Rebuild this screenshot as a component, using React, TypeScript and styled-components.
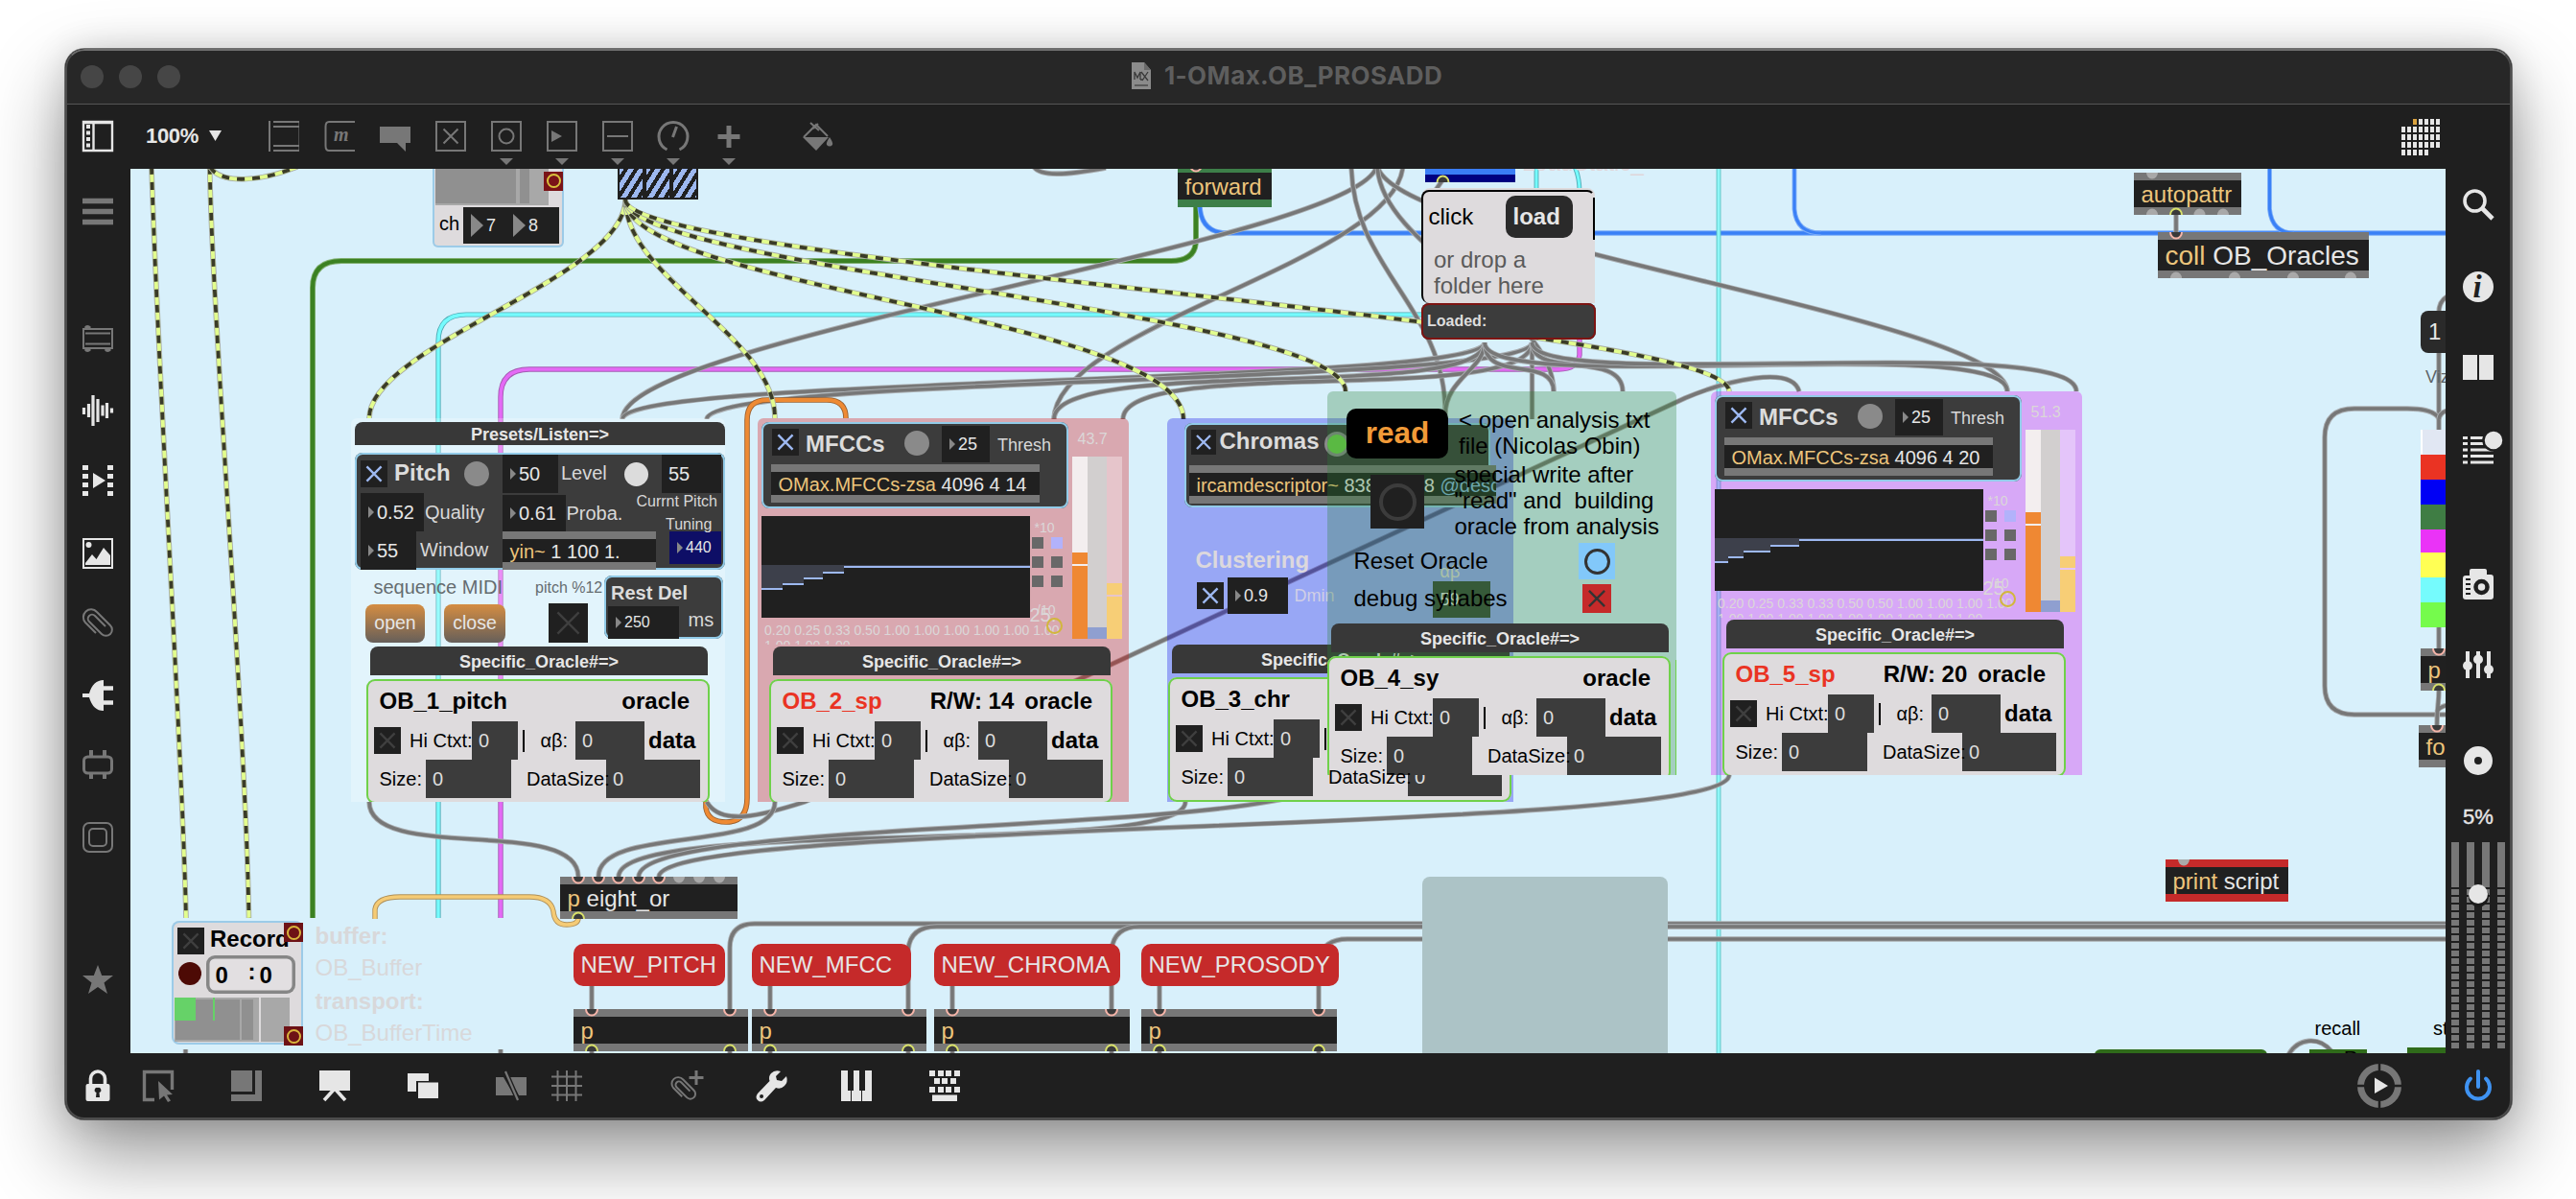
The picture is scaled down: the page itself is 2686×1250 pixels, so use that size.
import React from "react";
import styled, { createGlobalStyle } from "styled-components";

const Global = createGlobalStyle`
  * { box-sizing: border-box; }
  html, body { margin: 0; padding: 0; background: #fff; }
  body { width: 2686px; height: 1250px; overflow: hidden; font-family: "Liberation Sans", Arial, sans-serif; }
`;

const dark = "#202020";
const panel = "#3c3c3c";
const strip = "#777777";
const gold = "#edc57c";
const pale = "#e6e6e6";
const soft = "#dcdcdc";
const dim = "#777777";
const ring = "#92cbe8";

/* ---------- window frame ---------- */

const Desktop = styled.div`
  width: 2686px;
  height: 1250px;
  padding: 51px 67px 0 68px;
  background: #fff;
  overflow: hidden;
`;
const Window = styled.div`
  width: 2551px;
  height: 1116px;
  display: flex;
  flex-direction: column;
  border-radius: 20px;
  overflow: hidden;
  background: #1f1f1f;
  box-shadow: 0 36px 80px rgba(0, 0, 0, 0.42), 0 0 36px rgba(0, 0, 0, 0.14), 0 0 0 1px rgba(0, 0, 0, 0.5);
  position: relative;
  &::after {
    content: "";
    position: absolute;
    inset: 0;
    border-radius: 20px;
    border: 2px solid #4c4c4c;
    border-top-color: #6d6d6d;
    pointer-events: none;
  }
`;
const TitleBar = styled.header`
  flex: none;
  height: 58px;
  display: grid;
  grid-template-columns: 1fr auto 1fr;
  align-items: center;
  padding: 0 16px;
  background: #272727;
  border-bottom: 1px solid #555;
`;
const Lights = styled.div`
  display: flex;
  gap: 16px;
`;
const Light = styled.span`
  width: 24px;
  height: 24px;
  border-radius: 50%;
  background: #464646;
`;
const Title = styled.div`
  display: flex;
  align-items: center;
  gap: 14px;
  padding: 0 3px 2px 0;
  font: 700 26px/30px Inter, sans-serif;
  letter-spacing: 0.4px;
  color: #5e5e5e;
`;
const ToolBar = styled.div`
  flex: none;
  height: 67px;
  display: flex;
  align-items: flex-start;
  padding: 17px 6px 0 18px;
`;
const Zoom = styled.div`
  flex: none;
  margin: 6px 0 0 34px;
  width: 128px;
  display: flex;
  gap: 11px;
  font: 700 22px/20px "Liberation Sans", Arial, sans-serif;
  letter-spacing: -0.3px;
  color: ${pale};
`;
const ZoomArrow = styled.svg`
  margin-top: 4px;
`;
const Tools = styled.div`
  display: flex;
  gap: 26px;
`;
const Tool = styled.div<{ $menu?: boolean }>`
  width: 32px;
  display: flex;
  flex-direction: column;
  align-items: center;
  gap: 7px;
  &::after {
    content: "";
    display: ${(p) => (p.$menu ? "block" : "none")};
    border: 7px solid transparent;
    border-top: 7px solid ${dim};
    border-bottom: 0;
  }
`;
const PaintTool = styled.div`
  margin-left: 60px;
`;
const GridTool = styled.div`
  margin: -2px 69px 0 auto;
`;
const Main = styled.div`
  flex: none;
  height: 922px;
  display: grid;
  grid-template-columns: 68px 2414px 69px;
`;
const Side = styled.nav`
  display: flex;
  flex-direction: column;
  align-items: center;
  padding-right: 1px;
`;
const SideItem = styled.div<{ $gap: number }>`
  flex: none;
  margin-top: ${(p) => p.$gap}px;
  height: 32px;
`;
const Percent = styled.div`
  flex: none;
  margin: 33px 0 16px;
  height: 20px;
  font: 400 22px/20px "Liberation Sans", Arial, sans-serif;
  -webkit-text-stroke: 0.4px ${pale};
  color: ${pale};
`;
const Footer = styled.footer`
  flex: none;
  height: 69px;
  display: flex;
  padding: 18px 0 0 16px;
`;
const FootItem = styled.div<{ $gap?: number; $up?: number }>`
  margin-left: ${(p) => p.$gap ?? 0}px;
  margin-top: ${(p) => -(p.$up ?? 0)}px;
`;

/* ---------- patch canvas ---------- */

const Canvas = styled.main`
  position: relative;
  overflow: hidden;
  background: #d8f0fb;
`;
/* Shifts its children so they can be placed in patcher coordinates. */
const World = styled.div<{ $x: number; $y: number }>`
  position: absolute;
  left: ${(p) => -p.$x}px;
  top: ${(p) => -p.$y}px;
`;
const Wires = styled.svg`
  position: absolute;
  left: 136px;
  top: 176px;
`;
interface BoxProps {
  $x: number;
  $y: number;
  $w: number;
  $h: number;
  $bg?: string;
  $r?: number | string;
  $ring?: string;
  $rw?: number;
}
const Box = styled.div<BoxProps>`
  position: absolute;
  left: ${(p) => p.$x}px;
  top: ${(p) => p.$y}px;
  width: ${(p) => p.$w}px;
  height: ${(p) => p.$h}px;
  background: ${(p) => p.$bg ?? dark};
  border-radius: ${(p) => (typeof p.$r === "string" ? p.$r : `${p.$r ?? 0}px`)};
  box-shadow: ${(p) => (p.$ring ? `inset 0 0 0 ${p.$rw ?? 2}px ${p.$ring}` : "none")};
`;
const Patcher = styled(Box)`
  overflow: hidden;
`;
const ObjectBox = styled(Box)<{ $edge: string; $s: number }>`
  display: flex;
  align-items: center;
  padding: 1px 0 0 7.5px;
  border-top: 8px solid ${(p) => p.$edge};
  border-bottom: 8px solid ${(p) => p.$edge};
  overflow: hidden;
  white-space: pre;
  font-size: ${(p) => p.$s}px;
  line-height: ${(p) => p.$s}px;
  color: ${pale};
`;
const Header = styled(Box)`
  display: flex;
  align-items: center;
  justify-content: center;
  padding-top: 2px;
  background: #383838;
  border-radius: 8px 8px 0 0;
  color: ${pale};
  font-size: 18px;
  font-weight: 700;
  line-height: 20px;
`;
/* A message or text button: its caption sits in the middle of the box. */
const Button = styled(Box)<{ $s?: number; $c?: string; $bold?: boolean; $start?: number }>`
  display: flex;
  align-items: center;
  justify-content: ${(p) => (p.$start === undefined ? "center" : "flex-start")};
  padding-left: ${(p) => p.$start ?? 0}px;
  white-space: pre;
  font-size: ${(p) => p.$s ?? 24}px;
  line-height: 1;
  font-weight: ${(p) => (p.$bold ? 700 : 400)};
  color: ${(p) => p.$c ?? pale};
`;
const NumField = styled(Box)<{ $s: number }>`
  display: flex;
  align-items: center;
  gap: 3px;
  padding-left: 8px;
  font-size: ${(p) => p.$s}px;
  line-height: 1;
  color: ${pale};
`;
const Tri = styled.i<{ $w?: number; $h?: number }>`
  flex: none;
  border-style: solid;
  border-color: transparent transparent transparent #888;
  border-width: ${(p) => (p.$h ?? 12) / 2}px 0 ${(p) => (p.$h ?? 12) / 2}px ${(p) => p.$w ?? 6}px;
`;
/* Text placed by the left end of its baseline. */
const Label = styled.span<{ $x: number; $b: number; $s?: number; $c?: string; $bold?: boolean }>`
  position: absolute;
  left: ${(p) => p.$x}px;
  top: ${(p) => p.$b - 0.8465 * (p.$s ?? 24)}px;
  font-size: ${(p) => p.$s ?? 24}px;
  line-height: 1;
  font-weight: ${(p) => (p.$bold ? 700 : 400)};
  color: ${(p) => p.$c ?? "#000"};
  white-space: pre;
`;
const Gold = styled.span`
  color: ${gold};
`;
const Sky = styled.span`
  color: #8ab8e0;
`;
const Disc = styled.i<{ $x: number; $y: number; $r: number; $c: string; $ring?: string; $rw?: number }>`
  position: absolute;
  left: ${(p) => p.$x - p.$r}px;
  top: ${(p) => p.$y - p.$r}px;
  width: ${(p) => p.$r * 2}px;
  height: ${(p) => p.$r * 2}px;
  border-radius: 50%;
  background: ${(p) => p.$c};
  border: ${(p) => (p.$ring ? `${p.$rw ?? 2}px solid ${p.$ring}` : "0")};
`;
const Hatches = styled(Box)`
  display: grid;
  grid-template-columns: repeat(3, 28px);
`;
const Hatch = styled.i`
  background: repeating-linear-gradient(122deg, #9db8f0 0 5px, #202020 5px 9px);
  box-shadow: inset 0 0 0 2px #202020;
`;
const Channels = styled(Box)`
  display: grid;
  grid-template-columns: 13px 31px 13px auto;
  align-items: center;
  justify-content: start;
  padding-left: 8px;
  font-size: 18px;
  line-height: 1;
  color: ${pale};
  & > span { padding-left: 3px; }
`;
const Palette = styled(Box)`
  display: flex;
  flex-direction: column;
`;
const Swatch = styled.i<{ $c: string; $h: number }>`
  height: ${(p) => p.$h}px;
  background: ${(p) => p.$c};
  &:first-child { border-left: 2px solid #fff; }
`;
const Drop = styled(Box)`
  display: flex;
  flex-direction: column;
  padding: 57px 0 0 11px;
  font-size: 24px;
  line-height: 27px;
  color: #5a5a5a;
  border: 2px solid #000;
  border-right-color: transparent;
  border-bottom: 0;
`;

const ToggleSvg = styled.svg<{ $bg: string }>`
  display: block;
  flex: none;
  background: ${(p) => p.$bg};
`;
const Cross = ({ w, c, bg = dark }: { w: number; c: string; bg?: string }) => {
  const d = w * 0.27;
  const m = w / 2;
  return (
    <ToggleSvg $bg={bg} width={w} height={w}>
      <path d={`M${m - d} ${m - d}l${2 * d} ${2 * d}M${m + d} ${m - d}l${-2 * d} ${2 * d}`} stroke={c} strokeWidth="2.4" fill="none" />
    </ToggleSvg>
  );
};
const Toggle = ({ x, y, w = 28, c = "#9db8f0", bg = dark }: { x: number; y: number; w?: number; c?: string; bg?: string }) => (
  <Box $x={x} $y={y} $w={w} $h={w} $bg={bg}>
    <Cross w={w} c={c} bg={bg} />
  </Box>
);

const NumBox = ({ x, y, w, h, v, s = 20, bg }: { x: number; y: number; w: number; h: number; v: string; s?: number; bg?: string }) => (
  <NumField $x={x} $y={y} $w={w} $h={h} $s={s} $bg={bg}>
    <Tri />
    <span>{v}</span>
  </NumField>
);

const Obj = ({ x, y, w, h = 44, name, args, s = 24, edge = strip }: { x: number; y: number; w: number; h?: number; name: string; args?: React.ReactNode; s?: number; edge?: string }) => (
  <ObjectBox $x={x} $y={y} $w={w} $h={h} $edge={edge} $s={s}>
    <Gold>{name}</Gold>
    {args ? <span> {args}</span> : null}
  </ObjectBox>
);

/* ---------- oracle card ---------- */

const Card = styled(Box)`
  display: flex;
  flex-direction: column;
  font-size: 20px;
  line-height: 20px;
  white-space: pre;
`;
const CardTitle = styled.div<{ $red?: boolean }>`
  height: 44px;
  display: flex;
  align-items: center;
  gap: 11px;
  padding: 2px 21px 0 13.5px;
  font-size: 24px;
  font-weight: 700;
  & > :first-child {
    color: ${(p) => (p.$red ? "#ea3323" : "#000")};
    margin-right: auto;
  }
`;
const CardRow = styled.div<{ $cols: string }>`
  height: 40px;
  display: grid;
  grid-template-columns: ${(p) => p.$cols};
  align-items: center;
`;
const Field = styled.span`
  height: 40px;
  padding: 9.5px 0 0 7px;
  background: ${panel};
  color: #ddd;
`;
const Bar = styled.i`
  width: 2px;
  height: 23px;
  margin-left: 4.5px;
  background: #000;
`;
const Over = styled.span`
  position: relative;
  z-index: 1;
`;
const Data = styled.b`
  padding-left: 4px;
  font-size: 24px;
`;

const OracleCard = ({ x, y, name, red, rw }: { x: number; y: number; name: string; red?: boolean; rw?: string }) => (
  <Card $x={x} $y={y} $w={358} $h={130} $bg="#dedbdd" $r={9} $ring="#6fd14a">
    <CardTitle $red={red}>
      <span>{name}</span>
      {rw && <span>{rw}</span>}
      <span>oracle</span>
    </CardTitle>
    <CardRow $cols="8px 37px 65px 48px 23.5px 36.5px 72px auto">
      <i />
      <Cross w={28} c="#3f3f3f" />
      <Over>Hi Ctxt:</Over>
      <Field>0</Field>
      <Bar />
      <span>αβ:</span>
      <Field>0</Field>
      <Data>data</Data>
    </CardRow>
    <CardRow $cols="13.5px 48.5px 89px 16px 83px 98px">
      <i />
      <span>Size:</span>
      <Field>0</Field>
      <i />
      <Over>DataSize:</Over>
      <Field>0</Field>
    </CardRow>
  </Card>
);

/* ---------- MFCC module ---------- */

const faint = "#dbd7d8";

const Graph = styled(Box)`
  display: flex;
  padding-top: 51px;
`;
const Step = styled.i<{ $w: number; $h: number }>`
  width: ${(p) => p.$w}px;
  height: ${(p) => p.$h}px;
  background: #3d404b;
  border-bottom: 2px solid #9db8f0;
`;
const Matrix = styled(Box)`
  display: grid;
  grid-template-columns: 12px 12px;
  grid-auto-rows: 12px;
  gap: 8px;
  & > i { background: #686868; }
  & > i:nth-child(2) { background: #b2b2fb; }
`;
const Coeffs = styled(Box)`
  overflow: hidden;
  padding: 3px 0 0 3px;
  font-size: 14px;
  line-height: 16px;
  white-space: pre;
  color: ${faint};
`;
const Sliders = styled(Box)`
  display: grid;
  grid-template-columns: 16px 20px 16px;
`;
const Slider = styled.div<{ $bg: string; $cap?: boolean; $c: string }>`
  display: flex;
  flex-direction: column;
  justify-content: flex-end;
  gap: 2px;
  background: ${(p) => p.$bg};
  & > i { background: ${(p) => p.$c}; }
`;
const Fill = styled.i<{ $h: number }>`
  height: ${(p) => p.$h}px;
`;

interface MfccProps {
  x: number;
  y: number;
  tint: string;
  args: string;
  value: string;
  steps: number[];
  peak: number;
  row1: string;
  row2: string;
  name: string;
  rw: string;
}
const Mfcc = ({ x, y, tint, args, value, steps, peak, row1, row2, name, rw }: MfccProps) => {
  const heights = [26, 20.5, 14.5, 8.5, 3];
  return (
    <Patcher $x={x} $y={y} $w={387} $h={400} $bg={tint} $r="6px 6px 0 0">
      <World $x={790} $y={436}>
        <Box $x={794} $y={440} $w={320} $h={90} $bg={panel} $r={8} $ring={ring} />
        <Toggle x={805} y={447} />
        <Label $x={840} $b={471.3} $bold $c={soft}>MFCCs</Label>
        <Disc $x={956} $y={462} $r={13} $c="#8a8a8a" />
        <NumBox x={982} y={444} w={50} h={38} v="25" s={18} />
        <Label $x={1040} $b={470} $s={18} $c="#d8d8d8">Thresh</Label>
        <Obj x={804} y={484} w={280} h={40} s={20} name="OMax.MFCCs-zsa" args={args} />
        <Graph $x={794} $y={538} $w={280} $h={106}>
          {heights.map((h, i) => <Step key={h} $w={steps[i]} $h={h} />)}
        </Graph>
        <Label $x={1078.5} $b={555} $s={14} $c={faint}>*10</Label>
        <Matrix $x={1076} $y={560} $w={32} $h={52} $bg="none"><i /><i /><i /><i /><i /><i /></Matrix>
        <Label $x={1081} $b={640.7} $s={14} $c={faint}>/10</Label>
        <Label $x={1073.5} $b={648} $s={20} $c={faint}>25.</Label>
        <Coeffs $x={794} $y={646} $w={314} $h={26} $bg="none">
          <div>{row1}</div>
          <div>{row2}</div>
        </Coeffs>
        <Disc $x={1099.7} $y={652.7} $r={8.500} $c="transparent" $ring="#d2b73c" />
        <Label $x={1123.5} $b={463.3} $s={16} $c={faint}>{value}</Label>
        <Sliders $x={1118} $y={476} $w={52} $h={190} $bg="none">
          <Slider $bg="#f3eeef" $c="#ef8833"><Fill $h={12} /><Fill $h={652 - peak} /></Slider>
          <Slider $bg="#d2cfcf" $c="#8f9fd0"><Fill $h={12} /></Slider>
          <Slider $bg="rgba(255,255,255,.34)" $c="#f7ce76"><Fill $h={12} /><Fill $h={44} /></Slider>
        </Sliders>
        <Header $x={806} $y={674} $w={352} $h={30}>Specific_Oracle#=&gt;</Header>
        <OracleCard x={802} y={708} name={name} red rw={rw} />
      </World>
    </Patcher>
  );
};

/* ---------- patch cords ---------- */

const Cord = ({ d, c = "#777", o = "#a9adb0", w = 3.6 }: { d: string; c?: string; o?: string; w?: number }) => (
  <>
    <path d={d} stroke={o} strokeWidth={w + 1.8} />
    <path d={d} stroke={c} strokeWidth={w} />
  </>
);
const Signal = ({ d }: { d: string }) => (
  <>
    <path d={d} stroke="#a9ada6" strokeWidth="5.600" />
    <path d={d} stroke="#e2fd8d" strokeWidth="3.800" />
    <path d={d} stroke="#3a3b28" strokeWidth="3.800" strokeDasharray="8 8" />
  </>
);

const upperCords = [
  "M1078 174C1085 184 1110 183 1153 175",
  "M1436 170C1436 250 649 351 649 437",
  "M1463 170C1463 270 1099 340 1099 437",
  "M1409 170C1409 280 1507 320 1507 430",
  "M1436 170C1436 250 2093 331 2093 408",
  "M1436 170C1436 260 1620 320 1620 408",
  "M1504 188L1497 198",
  "M1548 357C1548 402 649 391 649 437",
  "M1597.500 357C1597 402 737 391 737 437",
  "M1548 357C1548 420 1099 370 1099 437",
  "M1597.500 357C1597 425 1171 370 1171 437",
  "M1597.500 357V437",
  "M1548 357C1548 385 1507 395 1507 432",
  "M1548 357C1548 400 1620 370 1620 408",
  "M1597.500 357C1597 395 1692 365 1692 408",
  "M1548 357C1548 415 2093 345 2093 408",
  "M1597.500 357C1597 410 2165 345 2165 408",
];
const lowerCords = [
  "M737 836C752 862 795 850 839 836L1130 706L1757 415C1800 397 1868 380 1876 408",
  "M385 836C385 900 603 850 603 914",
  "M808 836C808 890 624 860 624 914",
  "M1236 836C1236 895 645 850 645 914",
  "M1388 808C1388 872 666 850 666 914",
  "M1803 808C1803 870 687 854 687 914",
  "M761 1052V988Q761 963 787 963H2550",
  "M947 1052V990Q949 966 977 966H2550",
  "M1159 1052V990Q1162 966 1188 966H2550",
  "M1375 1052V1000Q1380 979 1405 979H2550",
  "M617 1026V1052M803 1026V1052M993 1026V1052M1209 1026V1052",
  "M617 1094V1099M761 1094V1099M803 1094V1099M947 1094V1099M993 1094V1099M1159 1094V1099M1209 1094V1099M1375 1094V1099",
  "M193.500 1094V1099M522 1094V1099",
  "M2269 222V243",
  "M2552 309Q2543 314 2543 326V448",
  "M2543 436Q2537 426 2510 426H2455Q2424 426 2424 456V715Q2424 745 2455 745H2552",
  "M2543 437Q2544 430 2552 428",
  "M2543 654V678M2543 720C2543 735 2541 735 2541 757M2541 742Q2543 737 2552 735",
  "M2386 1100C2396 1082 2418 1080 2431 1096",
];

const Ports = ({ xs, y, kind }: { xs: number[]; y: number; kind: "in" | "out" | "freeIn" | "freeOut" }) => (
  <>
    {xs.map((x) => {
      const down = kind === "in" || kind === "freeIn";
      const d = down ? `M${x - 6} ${y}a6 6.500 0 0 0 12 0` : `M${x - 6} ${y}a6 6.500 0 0 1 12 0`;
      const free = kind === "freeIn" || kind === "freeOut";
      return <path key={x} d={d} fill={free ? "#a9a9a9" : "#3a3a3a"} stroke={free ? "none" : kind === "in" ? "#f5b4a8" : "#d8e06a"} strokeWidth="2" />;
    })}
  </>
);

/* ---------- icons ---------- */

const IconSvg = styled.svg`
  display: block;
  flex: none;
  overflow: visible;
`;
const Ico = ({ children, c = dim, w = 32, h = 32 }: { children: React.ReactNode; c?: string; w?: number; h?: number }) => (
  <IconSvg width={w} height={h} viewBox={`0 0 ${w} ${h}`} fill="none" stroke={c} color={c} strokeWidth="2">
    {children}
  </IconSvg>
);
const f = { fill: "currentColor", stroke: "none" };

const clipPath = "M8 19L19 8a4 4 0 0 1 6 6L12 27a6.200 6.200 0 0 1-9-9L17 4a8 8 0 0 1 12 11L18 26";

const Meter = () => (
  <Ico w={56} h={217}>
    {[0, 16, 32, 48].map((x) => (
      <React.Fragment key={x}>
        <rect x={x} y="0" width="8" height="47" {...f} />
        {Array.from({ length: 21 }, (_, i) => (
          <rect key={i} x={x} y={49 + i * 8} width="8" height="6" {...f} />
        ))}
      </React.Fragment>
    ))}
    <circle cx="28.500" cy="57" r="10.500" fill="#1a1a1a" stroke="none" />
    <circle cx="28" cy="54" r="10" fill={pale} stroke="none" />
  </Ico>
);

const News = [
  { x: 598, w: 158, t: "NEW_PITCH", pw: 182 },
  { x: 784, w: 166, t: "NEW_MFCC", pw: 182 },
  { x: 974, w: 194, t: "NEW_CHROMA", pw: 204 },
  { x: 1190, w: 206, t: "NEW_PROSODY", pw: 204 },
];

const Note = styled(Box)`
  display: flex;
  flex-direction: column;
  font-size: 24px;
  line-height: 27px;
  white-space: pre;
  background: none;
`;
const BufferInfo = styled(Box)`
  display: grid;
  grid-template-rows: 33px 34.5px 33px 33px;
  font-size: 24px;
  line-height: 27px;
  background: none;
  color: #d8d8da;
`;
const Clock = styled(Box)`
  display: grid;
  grid-template-columns: 34px 12px auto;
  align-items: center;
  padding: 1px 0 0 9.5px;
  font-size: 24px;
  font-weight: 700;
  line-height: 24px;
  & > :nth-child(2) { padding-bottom: 8px; }
`;

export default function App() {
  return (
    <>
      <Global />
      <Desktop>
        <Window>
          <TitleBar>
            <Lights><Light /><Light /><Light /></Lights>
            <Title>
              <svg width="20" height="28" viewBox="0 0 20 28">
                <path d="M0 0h13l7 8v20H0z" fill="#8b8b8b" />
                <path d="M13 0v8h7z" fill="#6a6a6a" />
                <path d="M3 18V10l3 6 3-6v8M9 18h3M10 10l7 9M17 10l-6 9" stroke="#3a3a3a" strokeWidth="1.300" fill="none" />
                <path d="M3 24h14" stroke="#5a5a5a" strokeWidth="2" />
              </svg>
              1-OMax.OB_PROSADD
            </Title>
            <span />
          </TitleBar>
          <ToolBar>
            <Ico c={pale}>
              <path d="M1 1h30v30H1zM11.500 1v30M1 2h30" strokeWidth="2.400" />
              <path d="M6 4v24" strokeWidth="4" strokeDasharray="4 2.500" />
            </Ico>
            <Zoom>
              <span>100%</span>
              <ZoomArrow width="13" height="11" viewBox="0 0 13 11"><path d="M0 0h13l-6.500 11z" fill={pale} /></ZoomArrow>
            </Zoom>
            <Tools>
              <Tool><Ico><path d="M1 0v32M5 1h27M5 6h27M5 26h27M5 31h27" /><path d="M31.500 2v28" strokeWidth="1" opacity=".5" /></Ico></Tool>
              <Tool><Ico><path d="M32 1H5Q1.500 1 1.500 6v20q0 5 3.500 5h27" /><text x="10" y="21" fontFamily="Liberation Serif" fontStyle="italic" fontWeight="700" fontSize="20" {...f}>m</text></Ico></Tool>
              <Tool><Ico><path d="M0 6h32v17h-5v9l-9-9H0z" {...f} /></Ico></Tool>
              <Tool><Ico><path d="M1 1h30v30H1zM8.500 8.500l15 15M23.500 8.500l-15 15" /></Ico></Tool>
              <Tool $menu><Ico><path d="M1 1h30v30H1z" /><circle cx="16" cy="16" r="7.500" /></Ico></Tool>
              <Tool $menu><Ico><path d="M1 1h30v30H1z" /><path d="M5 10l11 6-11 6z" {...f} /></Ico></Tool>
              <Tool $menu><Ico><path d="M1 1h30v30H1zM5 16h22" /></Ico></Tool>
              <Tool $menu><Ico><path d="M9.500 30A15 15 0 1 1 22.500 30M15.500 17L19.500 6" strokeWidth="3" /></Ico></Tool>
              <Tool $menu><Ico><path d="M16 5v23M4.500 16.500h23" strokeWidth="5" /></Ico></Tool>
            </Tools>
            <PaintTool>
              <Ico>
                <path d="M2 17L15 4l12 12" strokeWidth="2" /><path d="M1 17h27L15 31z" {...f} /><path d="M9 2l9 8M17 3l-5 5" strokeWidth="2" />
                <path d="M29 17q4 6 3 8-3 3-6 0-1-2 3-8z" {...f} />
              </Ico>
            </PaintTool>
            <GridTool>
              <Ico w={40} h={38} c={pale}>
                {[0, 1, 2, 3, 4].map((r) =>
                  [0, 1, 2, 3, 4, 5, 6].filter((c) => !(r === 0 && c < 2) && !(r === 4 && c > 4)).map((c) => (
                    <rect key={`${r}-${c}`} x={c * 6} y={r * 8} width="4" height="6" fill={r === 0 && c === 2 ? "#dca440" : pale} stroke="none" />
                  ))
                )}
              </Ico>
            </GridTool>
          </ToolBar>
          <Main>
            <Side>
              <SideItem $gap={31}><Ico><path d="M0 2.500h32M0 13.500h32M0 24.500h32" strokeWidth="5.400" /></Ico></SideItem>
              <SideItem $gap={98}><Ico><path d="M1 6h30v20H1zM3 10.500h26M3 21.500h26" /><path d="M3 5q2-3 5 0M3 27q2 3 5 0M24 27q2 3 5 0" strokeWidth="3" /></Ico></SideItem>
              <SideItem $gap={43}><Ico c={pale}><path d="M1.500 13v7M6.500 9v14M11 0v32M16 4v24M21 10.500v11M25.500 8v16M30.500 13.500v5" strokeWidth="3.200" /></Ico></SideItem>
              <SideItem $gap={41}><Ico c={pale}><path d="M3 0v32M29 0v32" strokeWidth="6" strokeDasharray="5 4" /><path d="M11 8l13 8-13 8z" {...f} /></Ico></SideItem>
              <SideItem $gap={44}><Ico c={pale}><path d="M1 1h30v30H1z" /><circle cx="6.500" cy="7" r="3" {...f} /><path d="M3 28v-2l7-9 4.500 5L22 10l7 8v10z" {...f} /></Ico></SideItem>
              <SideItem $gap={41}><Ico><g transform="matrix(-1 0 0 1 32 0)"><path d={clipPath} /></g></Ico></SideItem>
              <SideItem $gap={43}><Ico c={pale}><path d="M0 14h7Q11 0 22 0v32Q11 32 7 18H0z" {...f} /><path d="M22 8.500h10M22 23.500h10" strokeWidth="4.600" /></Ico></SideItem>
              <SideItem $gap={40}><Ico><rect x="1.500" y="8" width="29" height="17" rx="4" strokeWidth="3" /><path d="M9 1v6M23 1v6M9 26v5M23 26v5" strokeWidth="4" /></Ico></SideItem>
              <SideItem $gap={44}><Ico><rect x="1" y="1" width="30" height="30" rx="6" /><rect x="7" y="7" width="18" height="18" rx="4" /></Ico></SideItem>
              <SideItem $gap={117}><Ico><path d="M16 0l4.200 11H32l-9.500 7.500L26 30l-10-7-10 7 3.500-11.500L0 11h11.800z" {...f} /></Ico></SideItem>
            </Side>
            <Canvas>
              <World $x={136} $y={176}>
                <Wires width="2414" height="922" viewBox="136 176 2414 922" fill="none">
                  <Cord d="M1247 208V250Q1247 272 1221 272H356Q326 272 326 300V957" c="#3b8122" o="#7fae70" w={4.2} />
                  <Cord d="M1251 214Q1252 243 1280 243H2552" c="#3a80f6" o="#7aacf8" w={3.6} />
                  <Cord d="M1871 170V218Q1873 243 1899 243M2366.500 170V218Q2369 243 2392 243" c="#3a80f6" o="#7aacf8" w={3} />
                  <Cord d="M1484 328H486Q457 328 457 356V957" c="#75fbfd" o="#4fa9b4" w={3.4} />
                  <Cord d="M1792 170V1100" c="#8ef7f8" o="#5cc0c0" w={3} />
                  <Cord d="M1602 170V200M1640 170Q1647 182 1647 200" c="#75fbfd" o="#4fa9b4" w={3} />
                  <Cord d="M1647 352V370Q1645 385 1625 385H552Q522 385 522 414V957" c="#e46af5" o="#a45cb2" w={3.6} />
                  <Cord d="M391 958V948Q393 935 417 935H552Q574 935 577 950Q578 964 591 964Q603 964 603 957" c="#f5cb75" o="#b0915a" w={3.6} />
                  {upperCords.map((d) => <Cord key={d} d={d} />)}
                  <Cord d="M736 834V842Q738 857 757 857Q779 857 779 832V438Q779 417 800 417H862Q882 417 882 436" c="#ee8a33" o="#9a6030" w={3.8} />
                  {lowerCords.map((d) => <Cord key={d} d={d} />)}
                  <Signal d="M158 174C165 400 190 780 194 957" />
                  <Signal d="M218.700 174C221 330 256 750 259.500 957" />
                  <Signal d="M219 174C230 192 270 190 310 174" />
                  <Signal d="M652 208C652 290 385 360 385 436" />
                  <Signal d="M652 208C652 290 808 350 808 436" />
                  <Signal d="M652 208C652 300 1234 330 1234 437" />
                  <Signal d="M652 208C652 280 1403 325 1403 408" />
                  <Signal d="M652 208C652 275 1803 335 1803 408" />
                </Wires>

                {/* level meter with output channels */}
                <Box $x={451} $y={160} $w={137} $h={98} $bg="#dedbdd" $r={6} $ring="#9ccbe8" />
                <Box $x={454} $y={170} $w={118} $h={44} $bg="#a8a8a8" />
                <Box $x={454} $y={170} $w={84} $h={42} $bg="#909090" />
                <Box $x={542} $y={170} $w={10} $h={42} $bg="#909090" />
                <Box $x={567} $y={179} $w={20} $h={20} $bg="#7a1418" />
                <Disc $x={577} $y={188.5} $r={7.500} $c="transparent" $ring="#d8c23c" />
                <Label $x={458} $b={240} $s={20}>ch</Label>
                <Channels $x={483} $y={216} $w={100} $h={38}>
                  <Tri $w={13} $h={24} /><span>7</span><Tri $w={13} $h={24} /><span>8</span>
                </Channels>

                <Hatches $x={644} $y={160} $w={84} $h={48} $bg="none"><Hatch /><Hatch /><Hatch /></Hatches>

                <Obj x={1228} y={172} w={98} name="forward" edge="#3d7f49" />
                <Box $x={1486} $y={170} $w={94} $h={12} $bg="#3a7df5" />
                <Box $x={1486} $y={182} $w={94} $h={8} $bg="#000080" />
                <Label $x={1587} $b={178} $c="#dfd6da">LoadStatic_</Label>

                {/* folder drop area */}
                <Box $x={1483} $y={196} $w={180} $h={120} $bg="#dedbdd" $r={8} />
                <Drop $x={1482} $y={198} $w={181} $h={118} $bg="#dedbdd" $r="8px 8px 0 8px">
                  <span>or drop a</span>
                  <span>folder here</span>
                </Drop>
                <Box $x={1661} $y={206} $w={2} $h={44} $bg="#000" />
                <Label $x={1489.5} $b={234}>click</Label>
                <Button $x={1570} $y={204} $w={70} $h={44} $bg="#2a2a2a" $r={10} $bold $start={7.500}>load</Button>
                <Button $x={1482} $y={316} $w={182} $h={38} $bg={panel} $r={8} $ring="#7d1412" $s={16} $bold $c="#dedede" $start={6}>Loaded:</Button>

                {/* storage objects */}
                <Obj x={2225} y={180} w={112} name="autopattr" />
                <Obj x={2250} y={242} w={220} h={48} name="coll" args="OB_Oracles" s={28} />
                <Button $x={2524} $y={324} $w={60} $h={44} $bg="#2a2a2a" $r={8} $start={8}>1</Button>
                <Label $x={2529} $b={399} $s={18} $c="#5c6468">Viz</Label>
                <Palette $x={2524} $y={448} $w={30} $h={206} $bg="none">
                  <Swatch $c="#e1e7f3" $h={26} />
                  <Swatch $c="#ea3323" $h={26} />
                  <Swatch $c="#0000f5" $h={26} />
                  <Swatch $c="#3f7d44" $h={26} />
                  <Swatch $c="#ea33f7" $h={24} />
                  <Swatch $c="#ffff54" $h={26} />
                  <Swatch $c="#75fbfd" $h={26} />
                  <Swatch $c="#75fb4c" $h={26} />
                </Palette>
                <Obj x={2524} y={676} w={50} name="p" />
                <Obj x={2522} y={756} w={50} name="fo" />
                <Obj x={2258} y={896} w={128} name="print" args="script" edge="#c52a2a" />
                <Label $x={2413.5} $b={1078.5} $s={20}>recall</Label>
                <Label $x={2537} $b={1078.5} $s={20}>store</Label>
                <Box $x={2184} $y={1094} $w={180} $h={20} $bg="#2f6b1a" $r={6} />
                <Box $x={2408} $y={1094} $w={60} $h={20} $bg="#2f6b1a" />
                <Label $x={2444} $b={1110} $s={20}>R</Label>
                <Box $x={2510} $y={1092} $w={60} $h={20} $bg="#2f6b1a" />

                <Box $x={1483} $y={914} $w={256} $h={200} $bg="#acc3c6" $r={8} />

                {/* module creation row */}
                <Obj x={584} y={914} w={185} name="p" args="eight_or" />
                {News.map((n) => (
                  <React.Fragment key={n.t}>
                    <Button $x={n.x} $y={984} $w={n.w} $h={44} $bg="#c52a2a" $r={10} $start={7.500}>{n.t}</Button>
                    <Obj x={n.x} y={1052} w={n.pw} name="p" />
                  </React.Fragment>
                ))}

                {/* recorder */}
                <Box $x={179} $y={960} $w={137} $h={129} $bg="#dedbdd" $r={8} $ring="#9ccbe8" />
                <Toggle x={185} y={967} c="#3f3f3f" />
                <Label $x={219} $b={987.7} $bold>Record</Label>
                <Disc $x={198} $y={1014.7} $r={12} $c="#4d0a05" />
                <Clock $x={215} $y={996} $w={93} $h={40} $bg="#e2dfe1" $r={9} $ring="#868686" $rw={3.5}>
                  <span>0</span><span>:</span><span>0</span>
                </Clock>
                <Box $x={182} $y={1040} $w={120} $h={46} $bg="#a8a8a8" />
                <Box $x={183} $y={1042} $w={67} $h={42} $bg="#909090" />
                <Box $x={252} $y={1042} $w={12} $h={42} $bg="#909090" />
                <Box $x={270} $y={1040} $w={2} $h={46} $bg="#dedbdd" />
                <Box $x={182} $y={1040} $w={22} $h={24} $bg="#66d268" />
                <Box $x={222} $y={1040} $w={2} $h={24} $bg="#66d268" />
                {[962, 1070].map((y) => (
                  <React.Fragment key={y}>
                    <Box $x={296} $y={y} $w={20} $h={20} $bg="#6e1216" />
                    <Disc $x={306} $y={y + 10} $r={7.500} $c="transparent" $ring="#d8b53c" />
                  </React.Fragment>
                ))}
                <BufferInfo $x={328.5} $y={962} $w={180} $h={134}>
                  <b>buffer:</b>
                  <span>OB_Buffer</span>
                  <b>transport:</b>
                  <span>OB_BufferTime</span>
                </BufferInfo>

                {/* pitch module */}
                <Patcher $x={366} $y={436} $w={390} $h={400} $bg="rgba(255,255,255,.25)" $r="6px 6px 0 0">
                  <World $x={366} $y={436}>
                    <Header $x={370} $y={440} $w={386} $h={24}>Presets/Listen=&gt;</Header>
                    <Box $x={370} $y={472} $w={386} $h={122} $bg={panel} $r={8} $ring={ring} />
                    <Toggle x={376} y={480} />
                    <Label $x={411} $b={501.7} $bold $c={soft}>Pitch</Label>
                    <Disc $x={497} $y={494} $r={13} $c="#8a8a8a" />
                    <NumBox x={524} y={474} w={58} h={40} v="50" />
                    <Label $x={585} $b={500} $s={20} $c="#d8d8d8">Level</Label>
                    <Disc $x={663.7} $y={494} $r={12.500} $c={soft} />
                    <Button $x={690} $y={474} $w={62} $h={40} $s={20} $start={7}>55</Button>
                    <NumBox x={376} y={514} w={66} h={40} v="0.52" />
                    <Label $x={443} $b={540.5} $s={20} $c="#d8d8d8">Quality</Label>
                    <NumBox x={524} y={516} w={66} h={38} v="0.61" />
                    <Label $x={590.5} $b={542} $s={20} $c="#d8d8d8">Proba.</Label>
                    <Label $x={663.5} $b={528.5} $s={16} $c="#d8d8d8">Currnt Pitch</Label>
                    <NumBox x={376} y={554} w={58} h={40} v="55" />
                    <Label $x={438} $b={580} $s={20} $c="#d8d8d8">Window</Label>
                    <Obj x={524} y={554} w={160} h={40} s={20} name="yin~" args="1 100 1." />
                    <NumBox x={698} y={554} w={54} h={34} v="440" s={16} bg="#0e0e66" />
                    <Label $x={694} $b={553} $s={16} $c="#d8d8d8">Tuning</Label>
                    <Label $x={389.5} $b={619.3} $s={20} $c="#656c70">sequence MIDI</Label>
                    <Label $x={558} $b={619} $s={16} $c="#656c70">pitch %12</Label>
                    <Button $x={381} $y={630} $w={62} $h={40} $bg="linear-gradient(#d58d42,#665f5a)" $r={8} $s={19.500}>open</Button>
                    <Button $x={463} $y={630} $w={64} $h={40} $bg="linear-gradient(#d58d42,#665f5a)" $r={8} $s={19.500}>close</Button>
                    <Toggle x={572} y={629} w={41} c="#3f3f3f" />
                    <Box $x={630} $y={600} $w={124} $h={66} $bg={panel} $r={8} $ring={ring} />
                    <Label $x={637} $b={624.5} $s={20} $bold $c={soft}>Rest Del</Label>
                    <NumBox x={634} y={632} w={74} h={34} v="250" s={16} />
                    <Label $x={717.5} $b={652.7} $s={20} $c="#d8d8d8">ms</Label>
                    <Header $x={386} $y={674} $w={352} $h={30}>Specific_Oracle#=&gt;</Header>
                    <OracleCard x={382} y={708} name="OB_1_pitch" />
                  </World>
                </Patcher>

                <Mfcc x={790} y={436} tint="rgba(220,4,2,.3)" args="4096 4 14" value="43.7" peak={576}
                  steps={[22, 22, 20, 22, 194]}
                  row1="0.20 0.25 0.33 0.50 1.00 1.00 1.00 1.00 1.00 1.00" row2="1.00 1.00 1.00" name="OB_2_sp" rw="R/W: 14" />

                {/* chroma module */}
                <Patcher $x={1217} $y={436} $w={361} $h={400} $bg="rgba(3,0,233,.3)" $r="6px 6px 0 0">
                  <World $x={1217} $y={436}>
                    <Box $x={1235} $y={441} $w={319} $h={88} $bg={panel} $r={8} $ring={ring} />
                    <Toggle x={1242} y={448} w={26} />
                    <Label $x={1271.5} $b={468} $bold $c={soft}>Chromas</Label>
                    <Disc $x={1394} $y={462.7} $r={13} $c="#6fd14a" $ring="#8a8a8a" $rw={3} />
                    <Obj x={1240} y={485} w={320} h={40} s={20} name="ircamdescriptor~" args={<>8384 2048 <Sky>@descriptors</Sky></>} />
                    <Label $x={1246.5} $b={592.3} $bold $c="#dcd8dd">Clustering</Label>
                    <Toggle x={1248} y={607} />
                    <NumBox x={1280} y={602} w={63} h={38} v="0.9" s={18} />
                    <Label $x={1349.5} $b={627} $s={18} $c="#d0cfe6">Dmin</Label>
                    <Label $x={1501.5} $b={602} $s={18} $c="#e0dcd8">αβ</Label>
                    <Button $x={1494} $y={606} $w={60} $h={38} $bg="#3c4a3c" $s={18} $start={7.500}>59</Button>
                    <Header $x={1222} $y={672} $w={352} $h={30}>Specific_Oracle#=&gt;</Header>
                    <OracleCard x={1218} y={706} name="OB_3_chr" />
                  </World>
                </Patcher>

                {/* syllable module */}
                <Patcher $x={1384} $y={408} $w={364} $h={400} $bg="rgba(44,130,52,.3)" $r="6px 6px 0 0">
                  <World $x={1384} $y={408}>
                    <Button $x={1404} $y={426} $w={106} $h={52} $bg="#000" $r={10} $s={31.500} $bold $c="#f19a38">read</Button>
                    <Note $x={1521} $y={424} $w={220} $h={54}>
                      <span>&lt; open analysis txt</span>
                      <span>file (Nicolas Obin)</span>
                    </Note>
                    <Note $x={1516.5} $y={481} $w={226} $h={81}>
                      <span>special write after</span>
                      <span>"read" and  building</span>
                      <span>oracle from analysis</span>
                    </Note>
                    <Box $x={1429} $y={495} $w={56} $h={56} />
                    <Disc $x={1457} $y={523} $r={19.500} $c="transparent" $ring="#3c3c3c" $rw={4} />
                    <Label $x={1411.5} $b={593.2}>Reset Oracle</Label>
                    <Label $x={1411.5} $b={632.2}>debug syllabes</Label>
                    <Box $x={1646} $y={566} $w={38} $h={38} $bg="#82c8fa" />
                    <Disc $x={1665} $y={585} $r={13.500} $c="transparent" $ring="#333" $rw={3} />
                    <Toggle x={1650} y={609} w={30} bg="#c52a2a" c="#333" />
                    <Header $x={1388} $y={650} $w={352} $h={30}>Specific_Oracle#=&gt;</Header>
                    <OracleCard x={1384} y={684} name="OB_4_sy" />
                    <Box $x={1747} $y={688} $w={1} $h={120} $bg="#6fd14a" />
                  </World>
                </Patcher>

                <Mfcc x={1784} y={408} tint="rgba(213,4,237,.3)" args="4096 4 20" value="51.3" peak={562}
                  steps={[14, 16, 28, 30, 192]}
                  row1="0.20 0.25 0.33 0.33 0.50 0.50 1.00 1.00 1.00 1.00" row2="1.00 1.00 1.00 1.00 1.00 1.00 1.00 1.00 1.00" name="OB_5_sp" rw="R/W: 20" />

                <Wires width="2414" height="922" viewBox="136 176 2414 922" fill="none">
                  <Ports kind="in" y={172} xs={[1247]} />
                  <Ports kind="out" y={190} xs={[1504.5]} />
                  <Ports kind="freeIn" y={180} xs={[2244]} />
                  <Ports kind="freeOut" y={224} xs={[2244, 2293.5, 2318]} />
                  <Ports kind="out" y={224} xs={[2269]} />
                  <Ports kind="in" y={242} xs={[2269]} />
                  <Ports kind="freeOut" y={290} xs={[2269, 2330, 2391, 2451]} />
                  <Ports kind="freeIn" y={896} xs={[2277]} />
                  <Ports kind="in" y={676} xs={[2543]} />
                  <Ports kind="out" y={720} xs={[2543]} />
                  <Ports kind="in" y={756} xs={[2541]} />
                  <Ports kind="in" y={914} xs={[603, 624, 645, 666, 687]} />
                  <Ports kind="freeIn" y={914} xs={[708, 729, 750]} />
                  <Ports kind="out" y={958} xs={[603]} />
                  <Ports kind="in" y={1052} xs={[617, 761, 803, 947, 993, 1159, 1209, 1375]} />
                  <Ports kind="out" y={1096} xs={[617, 761, 803, 947, 993, 1159, 1209, 1375]} />
                </Wires>
              </World>
            </Canvas>
            <Side>
              <SideItem $gap={21}><Ico c={pale}><circle cx="12.500" cy="12.500" r="10.500" strokeWidth="3.600" /><path d="M19.500 19.500L31 31" strokeWidth="4.600" /></Ico></SideItem>
              <SideItem $gap={54}><Ico c={pale}><circle cx="16" cy="16" r="16" {...f} /><text x="10.500" y="27" fontFamily="Liberation Serif" fontStyle="italic" fontWeight="700" fontSize="33" fill="#1f1f1f" stroke="none">i</text></Ico></SideItem>
              <SideItem $gap={55}><Ico c={pale}><path d="M0 0h15v26H0zM17 0h15v26H17z" {...f} /></Ico></SideItem>
              <SideItem $gap={48}><Ico c={pale}><path d="M0 6.500h5M8 6.500h24M0 12.500h5M8 12.500h24M0 19h5M8 19h24M0 25.500h5M8 25.500h24M0 32h5M8 32h24" strokeWidth="3" /><circle cx="32" cy="9" r="10.500" fill={pale} stroke="#1f1f1f" strokeWidth="2.500" /></Ico></SideItem>
              <SideItem $gap={111}><Ico c={pale}><path d="M7 7V2q0-2 2-2h14q2 0 2 2v4h4q3 0 3 3v20q0 3-3 3H3q-3 0-3-3V10q0-3 3-3z" {...f} /><circle cx="19.500" cy="19" r="6" stroke="#1f1f1f" strokeWidth="4.500" /><path d="M3 11h5M3 16h5M3 21h5M3 26h5" stroke="#1f1f1f" /></Ico></SideItem>
              <SideItem $gap={54}><Ico c={pale}><path d="M5 0v28M16 0v28M27 0v28" strokeWidth="4" /><circle cx="5" cy="15" r="5" {...f} /><circle cx="16" cy="8.500" r="5" {...f} /><circle cx="27" cy="19" r="5" {...f} /></Ico></SideItem>
              <SideItem $gap={66}><Ico c={pale}><circle cx="16" cy="16" r="9.500" strokeWidth="11" /></Ico></SideItem>
              <Percent>5%</Percent>
              <Meter />
            </Side>
          </Main>
          <Footer>
            <FootItem $gap={2}><Ico c={pale}><path d="M8.500 15V8.500a7.500 7.500 0 0 1 15 0V15" strokeWidth="3.600" /><rect x="3.500" y="14" width="25" height="18" rx="2" {...f} /><path d="M16 18a2.500 2.500 0 0 1 1.500 5l.5 5h-4l.5-5A2.500 2.500 0 0 1 16 18z" fill="#1f1f1f" stroke="none" /></Ico></FootItem>
            <FootItem $gap={31}><Ico><path d="M12 30.500H1.500v-29h29V20" strokeWidth="3.400" /><path d="M16 11l15 14-6 .5 4 6-3 1.500-4-6.500-5 4z" {...f} /></Ico></FootItem>
            <FootItem $gap={60}><Ico><path d="M0 0h22v22H0zM25 0h7v32H0v-7h25z" {...f} /></Ico></FootItem>
            <FootItem $gap={60}><Ico c={pale}><path d="M0 0h32v21H0z" {...f} /><path d="M15 20L5 31M17 20l10 11" strokeWidth="3.600" /></Ico></FootItem>
            <FootItem $gap={60}><Ico c={pale}><path d="M0 3h22v8H9v11H0z" {...f} /><path d="M11 12.500h21V29H11z" {...f} /></Ico></FootItem>
            <FootItem $gap={60}><Ico><path d="M0 7h8l11 19H0zM14 7h18v19h-8z" {...f} /><path d="M10 1l13 30" strokeWidth="5" stroke="#1f1f1f" /><path d="M10 1l13 30" strokeWidth="2.200" /></Ico></FootItem>
            <FootItem $gap={26}><Ico><path d="M6.500 0v32M16 0v32M25.500 0v32M0 6.500h32M0 16h32M0 25.500h32" /></Ico></FootItem>
            <FootItem $gap={94}><Ico><g transform="matrix(-.82 0 0 .82 25 6)"><path d={clipPath} strokeWidth="2.400" /></g><path d="M25 0v15M17.500 7.500h15" strokeWidth="3" /></Ico></FootItem>
            <FootItem $gap={56}><Ico c={pale}><path d="M31 6l-5 5-5-1-1-4 5-5q-6-2-10 2-3 3-1.500 8L1 24q-3 4 0 7t7 0L20 18q5 2 9-2 4-4 2-10zM5 29a2 2 0 1 1 .1-4 2 2 0 0 1-.1 4z" {...f} fillRule="evenodd" /></Ico></FootItem>
            <FootItem $gap={56}><Ico c={pale}><path d="M0 0h7v21h3v11H0zM13 0h6v21h2v11H11V21h2zM25 0h7v32H22V21h3z" {...f} /></Ico></FootItem>
            <FootItem $gap={60}><Ico c={pale}><path d="M0 0h6v6H0zM9 0h6v6H9zM17 0h6v6h-6zM26 0h6v6h-6zM5 8h6v6H5zM13 8h6v6h-6zM22 8h6v6h-6zM0 17h6v6H0zM9 17h6v6H9zM17 17h6v6h-6zM26 17h6v6h-6zM3 25.500h26V32H3z" {...f} /></Ico></FootItem>
            <FootItem $gap={1457} $up={7}>
              <Ico w={46} h={46}>
                <circle cx="23" cy="23" r="19.500" strokeWidth="7" />
                <path d="M23 0v8M23 38v8M0 23h8M38 23h8" stroke="#1f1f1f" strokeWidth="2.500" />
                <path d="M18 14.500L32 23l-14 8z" fill={pale} stroke="none" />
              </Ico>
            </FootItem>
            <FootItem $gap={64}><Ico c="#3f93f2"><path d="M8 8.500a12 12 0 1 0 16 0M16 1v16" strokeWidth="4" strokeLinecap="round" /></Ico></FootItem>
          </Footer>
        </Window>
      </Desktop>
    </>
  );
}
